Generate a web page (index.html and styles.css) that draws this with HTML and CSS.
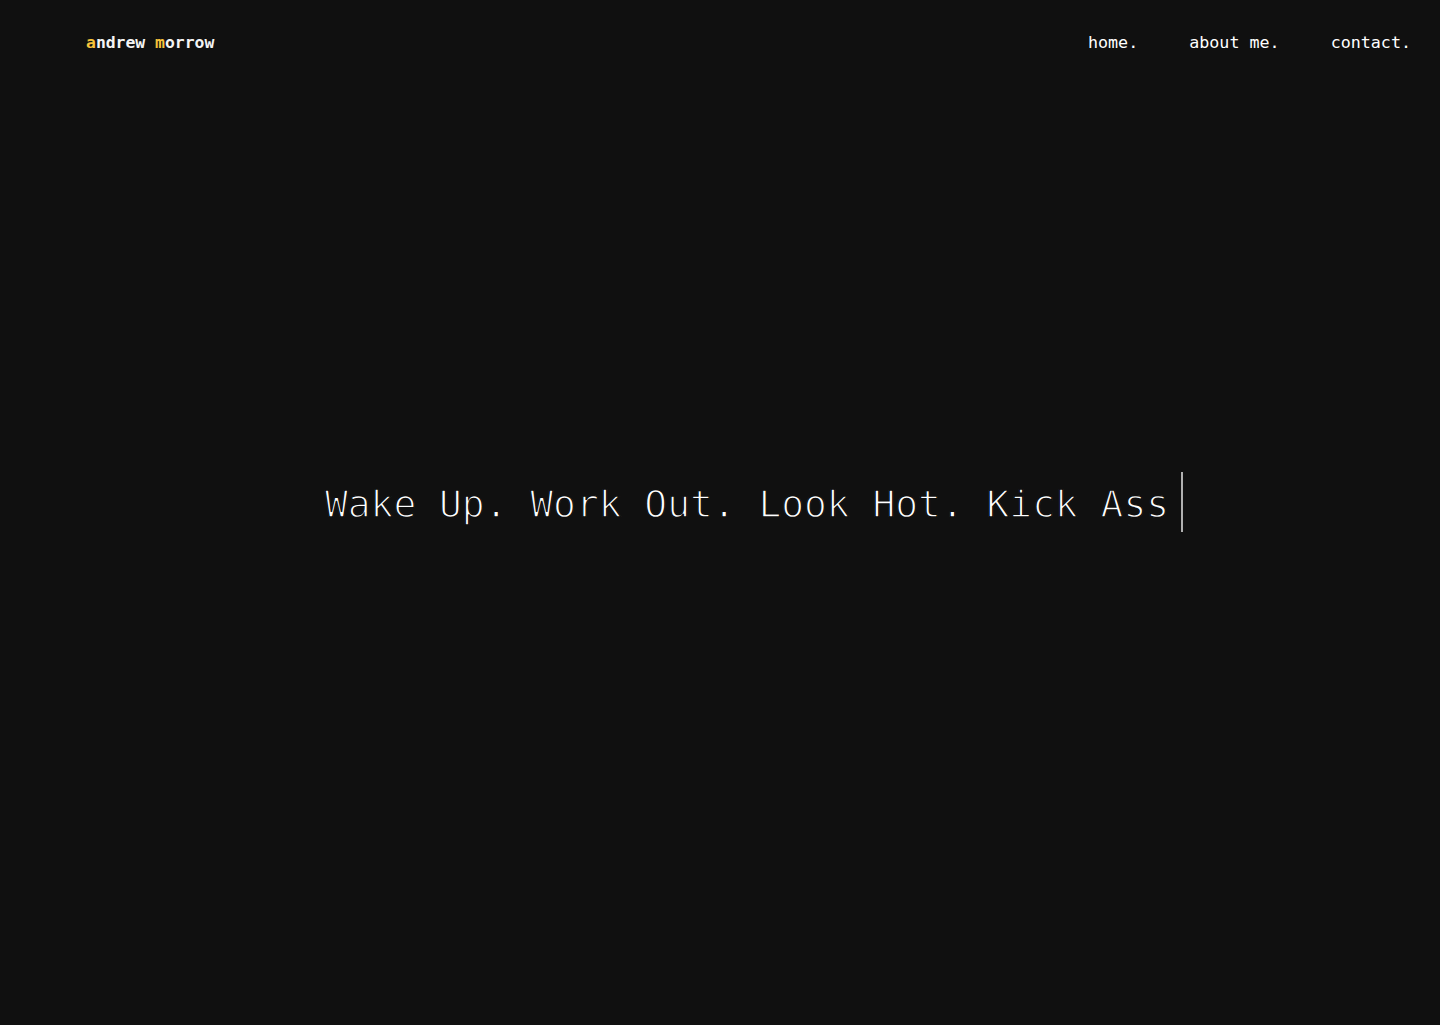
FILE: index.html
```html
<!DOCTYPE html>
<html lang="en">
<head>
<meta charset="utf-8">
<title>andrew morrow</title>
<link rel="stylesheet" href="styles.css">
</head>
<body>
<header class="site-header">
  <a class="logo" href="#"><span class="accent">a</span>ndrew <span class="accent">m</span>orrow</a>
  <nav class="nav">
    <a class="nav-link" href="#">home.</a>
    <a class="nav-link" href="#">about me.</a>
    <a class="nav-link" href="#">contact.</a>
  </nav>
</header>
<main class="hero">
  <div class="typing">
    <span class="typing-text">Wake Up. Work Out. Look Hot. Kick Ass</span><span class="cursor"></span>
  </div>
</main>
</body>
</html>
```
FILE: styles.css
```css
html, body {
  margin: 0;
  padding: 0;
  background: #101010;
  height: 100%;
}
body {
  font-family: "DejaVu Sans Mono", "Liberation Mono", monospace;
  color: #f2f2f2;
  overflow: hidden;
}
a {
  text-decoration: none;
  color: inherit;
}
.site-header {
  height: 84px;
  display: flex;
  align-items: center;
  justify-content: space-between;
  padding: 0 29px 0 86px;
}
.logo {
  font-weight: 700;
  font-size: 16.4px;
  color: #f4f4f4;
}
.accent {
  color: #f6c33b;
}
.nav {
  display: flex;
  gap: 51px;
}
.nav-link {
  font-size: 16.7px;
  color: #ffffff;
}
.hero {
  padding: 388px 0 0 325px;
}
.typing {
  display: flex;
  align-items: flex-start;
}
.typing-text {
  font-size: 37.9px;
  line-height: 60px;
  padding-top: 2px;
  color: #ffffff;
  white-space: pre;
  -webkit-text-stroke: 1.4px #101010;
}
.cursor {
  width: 2px;
  height: 60px;
  background: #b0b0b0;
  margin-left: 12px;
}
```
